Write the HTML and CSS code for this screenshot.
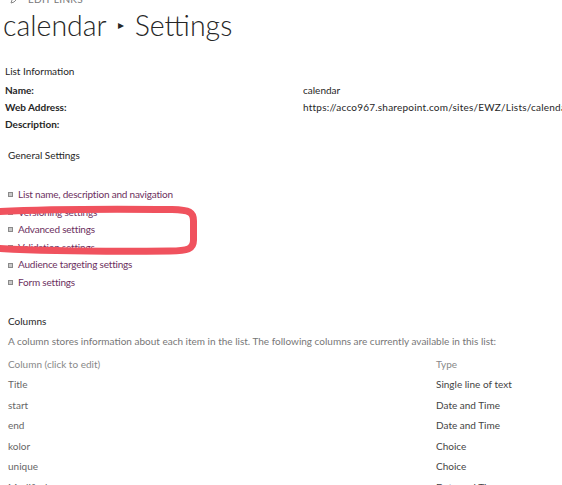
FILE: index.html
```html
<!DOCTYPE html>
<html>
<head>
<meta charset="utf-8">
<link rel="stylesheet" href="styles.css">
</head>
<body>
<div class="page">
  <div class="edit-links">
    <svg class="pencil" width="10" height="10" viewBox="0 0 10 10"><path d="M1 9 L2 6 L7 1 L9 3 L4 8 Z" fill="none" stroke="#888" stroke-width="1"/></svg>
    <span>EDIT LINKS</span>
  </div>
  <h1 class="title"><span>calendar</span><span class="arrow">&#9656;</span><span>Settings</span></h1>

  <section class="list-info">
    <h2 class="sec-head">List Information</h2>
    <div class="info-grid">
      <div class="label">Name:</div><div class="value">calendar</div>
      <div class="label">Web Address:</div><div class="value url">https://acco967.sharepoint.com/sites/EWZ/Lists/calendar/AllItems.aspx</div>
      <div class="label">Description:</div><div class="value"></div>
    </div>
  </section>

  <section class="general">
    <h2 class="sec-head indent">General Settings</h2>
    <ul class="links">
      <li><a href="#">List name, description and navigation</a></li>
      <li><a href="#">Versioning settings</a></li>
      <li><a href="#">Advanced settings</a></li>
      <li><a href="#">Validation settings</a></li>
      <li><a href="#">Audience targeting settings</a></li>
      <li><a href="#">Form settings</a></li>
    </ul>
  </section>

  <section class="columns">
    <h2 class="sec-head indent">Columns</h2>
    <p class="desc">A column stores information about each item in the list. The following columns are currently available in this list:</p>
    <div class="col-table">
      <div class="th">Column (click to edit)</div><div class="th">Type</div>
      <div class="cname">Title</div><div class="ctype">Single line of text</div>
      <div class="cname">start</div><div class="ctype">Date and Time</div>
      <div class="cname">end</div><div class="ctype">Date and Time</div>
      <div class="cname">kolor</div><div class="ctype">Choice</div>
      <div class="cname">unique</div><div class="ctype">Choice</div>
      <div class="cname">Modified</div><div class="ctype">Date and Time</div>
    </div>
  </section>

  <svg class="annotation" width="210" height="60" viewBox="0 0 210 60">
    <path d="M-8 12 C 40 9, 120 9, 172 9.5 C 190 10, 193.5 12, 193.5 21 L 193.5 40 C 193.5 49, 188 51, 170 51 C 120 51.5, 40 51, -8 48" fill="none" stroke="#f0525e" stroke-width="7"/>
  </svg>
</div>
</body>
</html>
```
FILE: styles.css
```css
html, body {
  margin: 0;
  padding: 0;
  background: #ffffff;
}
body {
  font-family: "Segoe UI", Lato, "Open Sans", sans-serif;
  color: #444444;
  font-size: 10px;
  overflow: hidden;
  width: 562px;
  height: 485px;
}
.page {
  position: relative;
  display: flow-root;
  padding-left: 5px;
}
.edit-links {
  display: flex;
  align-items: center;
  gap: 8px;
  height: 12px;
  margin-top: -7px;
  padding-left: 5px;
  font-size: 10px;
  color: #777;
  letter-spacing: 0.3px;
}
.title {
  margin: 0 0 0 -2px;
  font-weight: 300;
  font-size: 28.5px;
  line-height: 40px;
  color: #262626;
  display: flex;
  align-items: center;
  gap: 11px;
}
.title .arrow {
  font-size: 12px;
  color: #262626;
}
.sec-head {
  margin: 0;
  font-weight: 400;
  font-size: 10px;
  color: #262626;
  line-height: 16px;
}
.sec-head.indent {
  padding-left: 3px;
}
.list-info {
  margin-top: 18px;
}
.info-grid {
  display: grid;
  grid-template-columns: 298px 1fr;
  margin-top: 3px;
  row-gap: 1px;
}
.info-grid .label {
  font-weight: 700;
  color: #262626;
  line-height: 16px;
}
.info-grid .value {
  line-height: 16px;
  color: #262626;
  white-space: nowrap;
  overflow: hidden;
}
.info-grid .url {
  letter-spacing: 0.22px;
}
.general {
  margin-top: 15px;
}
.links {
  list-style: none;
  margin: 23px 0 0 0;
  padding: 0 0 0 3px;
}
.links li {
  display: flex;
  align-items: center;
  gap: 5px;
  line-height: 17.6px;
  letter-spacing: -0.2px;
}
.links li::before {
  content: "";
  width: 3px;
  height: 3px;
  border: 1px solid #8a8a8a;
  background: #c8c8c8;
}
.links a {
  color: #6c2f5e;
  text-decoration: none;
}
.columns {
  margin-top: 21px;
}
.desc {
  margin: 4px 0 0 3px;
  color: #777;
  line-height: 16px;
}
.col-table {
  display: grid;
  grid-template-columns: 428px 1fr;
  margin-top: 7px;
  padding-left: 3px;
  row-gap: 4.5px;
}
.col-table .th {
  color: #888;
  line-height: 16px;
}
.col-table .cname {
  color: #666;
  line-height: 16px;
}
.col-table .ctype {
  color: #444;
  line-height: 16px;
}
.annotation {
  position: absolute;
  left: 0;
  top: 200px;
  overflow: visible;
}
```
